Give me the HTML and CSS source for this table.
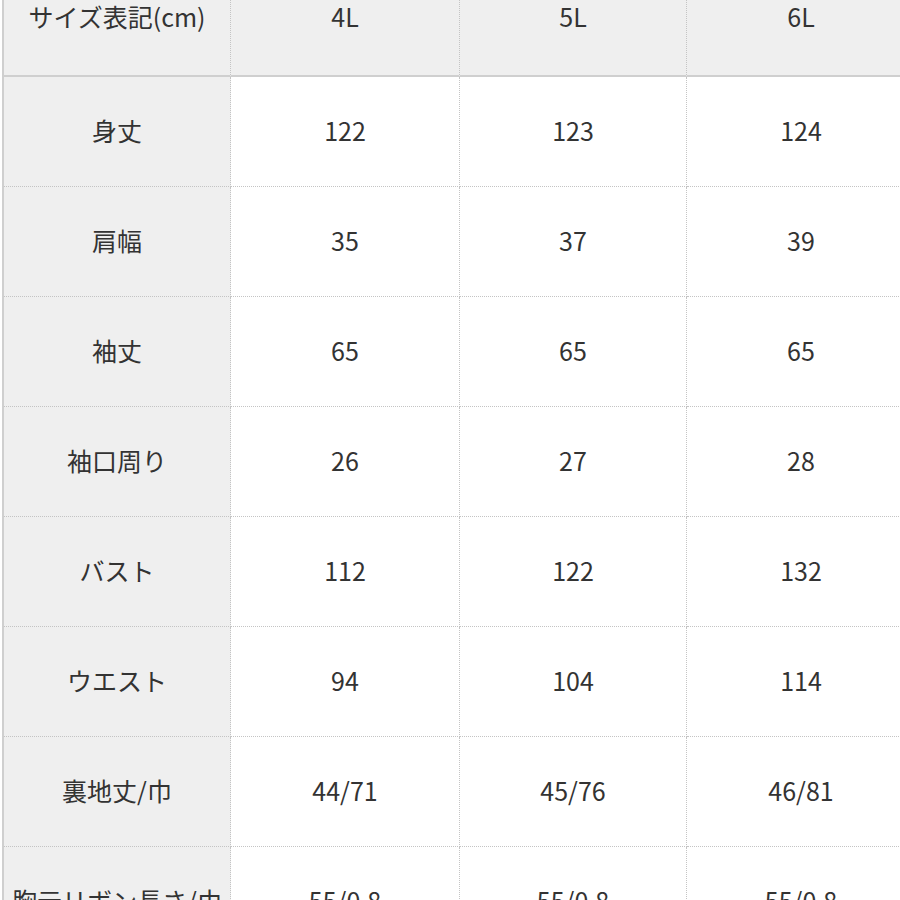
FILE: index.html
```html
<!DOCTYPE html>
<html lang="ja">
<head>
<meta charset="utf-8">
<title>サイズ表</title>
<link rel="stylesheet" href="styles.css">
</head>
<body>
<div class="size-table">
  <div class="cell head label">サイズ表記(cm)</div>
  <div class="cell head">4L</div>
  <div class="cell head">5L</div>
  <div class="cell head last">6L</div>

  <div class="cell label">身丈</div>
  <div class="cell">122</div>
  <div class="cell">123</div>
  <div class="cell last">124</div>

  <div class="cell label">肩幅</div>
  <div class="cell">35</div>
  <div class="cell">37</div>
  <div class="cell last">39</div>

  <div class="cell label">袖丈</div>
  <div class="cell">65</div>
  <div class="cell">65</div>
  <div class="cell last">65</div>

  <div class="cell label">袖口周り</div>
  <div class="cell">26</div>
  <div class="cell">27</div>
  <div class="cell last">28</div>

  <div class="cell label">バスト</div>
  <div class="cell">112</div>
  <div class="cell">122</div>
  <div class="cell last">132</div>

  <div class="cell label">ウエスト</div>
  <div class="cell">94</div>
  <div class="cell">104</div>
  <div class="cell last">114</div>

  <div class="cell label">裏地丈/巾</div>
  <div class="cell">44/71</div>
  <div class="cell">45/76</div>
  <div class="cell last">46/81</div>

  <div class="cell label">胸元リボン長さ/巾</div>
  <div class="cell">55/0.8</div>
  <div class="cell">55/0.8</div>
  <div class="cell last">55/0.8</div>
</div>
</body>
</html>
```

FILE: styles.css
```css
html, body {
  margin: 0;
  padding: 0;
  background: #ffffff;
  overflow: hidden;
}

.size-table {
  display: grid;
  grid-template-columns: 227px 229px 227px 228px;
  grid-template-rows: 115px;
  grid-auto-rows: 110px;
  margin-top: -38px;
  margin-left: 2px;
  width: 913px;
  border-left: 2px solid #cfcfcf;
  font-family: "Noto Sans CJK JP", "Noto Sans", sans-serif;
  font-size: 25px;
  line-height: 1.2;
  color: #333333;
}

.cell {
  display: flex;
  align-items: center;
  justify-content: center;
  box-sizing: border-box;
  padding-bottom: 3px;
  background: #ffffff;
  border-right: 1px dotted #c4c4c4;
  border-bottom: 1px dotted #c4c4c4;
  white-space: nowrap;
  overflow: hidden;
}

.cell.last {
  border-right: none;
}

.label {
  background: #efefef;
}

.head {
  background: #efefef;
  padding-bottom: 6px;
  border-bottom: 2px solid #cfcfcf;
}
```
